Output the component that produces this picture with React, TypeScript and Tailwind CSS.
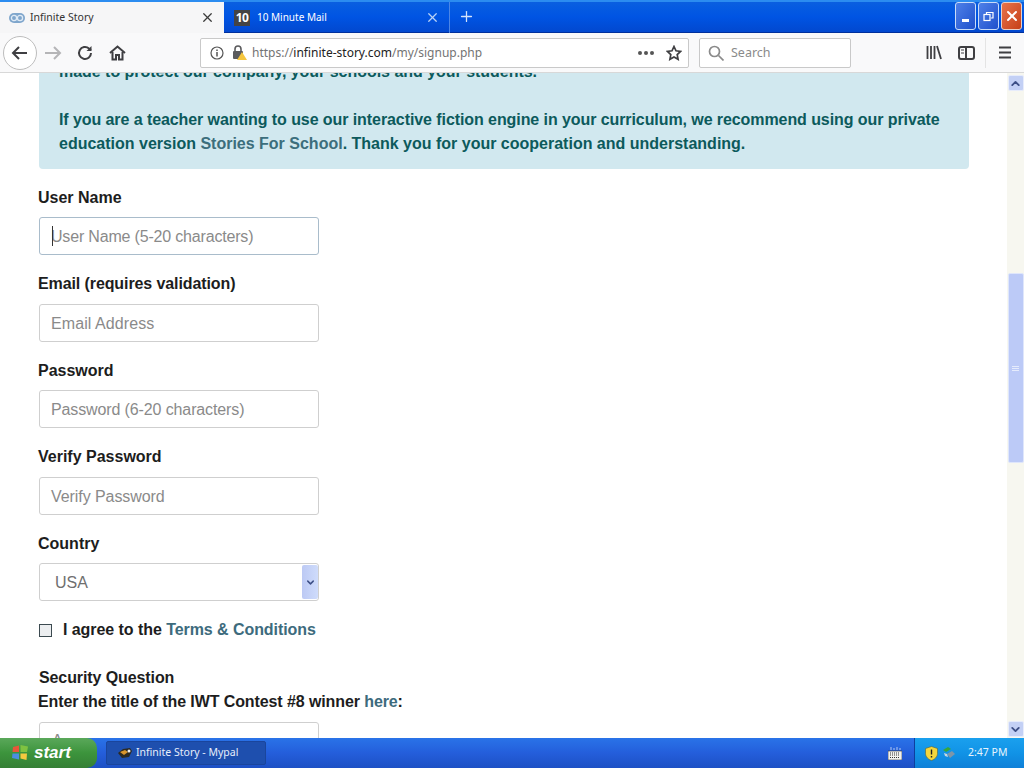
import React from "react";
import { ChevronUp, ChevronDown, X, Plus } from "lucide-react";

const Label = ({ children, className = "" }: { children: React.ReactNode; className?: string }) => (
  <label className={`block h-6 leading-6 text-[16px] font-bold text-[#1d1d1d] ${className}`}>{children}</label>
);

const Field = ({ label, placeholder, focus, labelClass = "", textClass = "" }: { label: string; placeholder: string; focus?: boolean; labelClass?: string; textClass?: string }) => (
  <div className="mb-[17px]">
    <Label className={`mb-[7.5px] ${labelClass}`}>{label}</Label>
    <div className={`relative ml-px w-[280px] h-[38px] rounded-[3px] border bg-white flex items-center pl-[11px] pt-[2px] text-[16px] text-[#8a8a8a] ${focus ? "border-[#a9bccb]" : "border-[#cfcfcf]"} ${textClass}`}>
      {focus && <span className="absolute left-3 top-[8px] w-px h-5 bg-[#333]" />}
      {placeholder}
    </div>
  </div>
);

const Sidebar = () => (
  <svg width="20" height="16" viewBox="0 0 20 16" fill="none" stroke="#3f3f42" strokeWidth="2">
    <rect x="2" y="2" width="15" height="12" rx="2" />
    <path d="M9 2v12" />
    <path d="M4 5h3M4 8h3" strokeWidth="1" />
  </svg>
);

export default function App() {
  return (
    <div className="relative w-[1024px] h-[768px] overflow-hidden flex flex-col bg-white font-['Liberation_Sans',sans-serif]">
      {/* title bar + tabs */}
      <div className="h-[33px] shrink-0 flex bg-gradient-to-b from-[#0a5fe0] via-[#0054e3] to-[#0248cf] border-t-2 border-[#2b8cf0] border-b border-b-[#00309c]">
        <div className="w-[224px] h-[31px] bg-[#f6f6f7] flex items-center font-['Noto_Sans',sans-serif] text-[10.5px] text-[#333]">
          <svg className="ml-[9px] mr-[5px]" width="16" height="10" viewBox="0 0 16 10">
            <rect width="16" height="10" rx="5" fill="#7fa6cc" />
            <circle cx="5" cy="5" r="2.6" fill="none" stroke="#dfeaf5" strokeWidth="1.3" />
            <circle cx="11" cy="5" r="2.6" fill="none" stroke="#dfeaf5" strokeWidth="1.3" />
          </svg>
          <span>Infinite Story</span>
          <X className="ml-auto mr-[9px]" size={15} strokeWidth={2} color="#3a3a3a" />
        </div>
        <div className="w-[226px] h-[31px] flex items-center font-['Noto_Sans',sans-serif] text-[10px] text-white border-r border-[#4c86e6]">
          <span className="ml-[10px] mr-[7px] w-4 h-4 bg-[#444] text-white text-[12px] font-bold leading-4 text-center tracking-[-0.5px]">10</span>
          <span>10 Minute Mail</span>
          <X className="ml-auto mr-[9px]" size={15} strokeWidth={2} color="#b9d2f6" />
        </div>
        <Plus className="ml-[8px] mt-[6px]" size={17} strokeWidth={1.8} color="#d5e4fb" />
        <div className="ml-auto flex gap-[2px] pr-[2px]">
          <div className="w-[21px] h-[28px] rounded-[3px] border border-[#c9dcf8] bg-gradient-to-br from-[#4f80e8] to-[#1f50cc] flex items-end justify-center pb-[7px]">
            <span className="block w-[7px] h-[3px] bg-white" />
          </div>
          <div className="w-[21px] h-[28px] rounded-[3px] border border-[#c9dcf8] bg-gradient-to-br from-[#4f80e8] to-[#1f50cc] flex items-center justify-center">
            <svg width="11" height="11" viewBox="0 0 11 11" fill="none" stroke="#fff">
              <rect x="1" y="3.5" width="6" height="6" strokeWidth="1.2" />
              <path d="M3.5 3V1.5h6.5V7H8" strokeWidth="1.2" />
            </svg>
          </div>
          <div className="w-[21px] h-[28px] rounded-[3px] border border-[#e8d0c8] bg-gradient-to-br from-[#e8734a] to-[#c63f16] flex items-center justify-center">
            <X size={16} strokeWidth={3} color="#fff" />
          </div>
        </div>
      </div>

      {/* nav bar */}
      <div className="h-[40px] shrink-0 flex items-center bg-[#f9f9fa] border-b border-[#d8d8d8]">
        <div className="ml-[3px] w-[34px] h-[34px] rounded-full border border-[#bdbdbd] bg-white flex items-center justify-center">
          <svg width="18" height="16" viewBox="0 0 18 16" fill="none" stroke="#3f3f42" strokeWidth="2"><path d="M16 8H2M8 2L2 8l6 6" /></svg>
        </div>
        <svg className="ml-[7px]" width="18" height="16" viewBox="0 0 18 16" fill="none" stroke="#b5b5b7" strokeWidth="2"><path d="M1 8h15M10 2l6 6-6 6" /></svg>
        <svg className="ml-[15px]" width="16" height="16" viewBox="0 0 16 16" fill="none" stroke="#3f3f42" strokeWidth="2"><path d="M14 8a6 6 0 1 1-2-4.5L14 5" /><path d="M14.5 1v5h-5" fill="#3f3f42" strokeWidth="0" /></svg>
        <svg className="ml-[16px]" width="17" height="16" viewBox="0 0 17 16" fill="none" stroke="#3f3f42" strokeWidth="2"><path d="M1 8l7.5-6.5L16 8" /><path d="M3.5 7v7.5h3.5V10h3v4.5h3.5V7" /></svg>
        <div className="ml-[74px] w-[489px] h-[30px] rounded-[2px] border border-[#c9c9c9] bg-white flex items-center font-['Noto_Sans',sans-serif] text-[12px] text-[#737373]">
          <svg className="ml-[9px]" width="14" height="14" viewBox="0 0 14 14" fill="none" stroke="#555"><circle cx="7" cy="7" r="6" strokeWidth="1.2" /><path d="M7 6v4.5M7 3.5v1.5" strokeWidth="1.5" /></svg>
          <svg className="ml-[8px] mr-[5px]" width="15" height="15" viewBox="0 0 15 15">
            <rect x="1" y="6" width="10" height="8" rx="1" fill="#5b5b5d" />
            <path d="M3 6V4a3 3 0 0 1 6 0v2" fill="none" stroke="#5b5b5d" strokeWidth="1.6" />
            <path d="M10 7l5 8H5z" fill="#f5c63f" />
          </svg>
          <span className="pt-px">https://<span className="text-[#222]">infinite-story.com</span>/my/signup.php</span>
          <div className="ml-auto flex gap-[2px]">
            <span className="w-1 h-1 rounded-full bg-[#555]" /><span className="w-1 h-1 rounded-full bg-[#555]" /><span className="w-1 h-1 rounded-full bg-[#555]" />
          </div>
          <svg className="ml-[12px] mr-[6px]" width="16" height="16" viewBox="0 0 16 16" fill="none" stroke="#3f3f42" strokeWidth="1.7"><path d="M8 1.5l2 4.3 4.6.6-3.4 3.2.9 4.7L8 12l-4.1 2.3.9-4.7L1.4 6.4 6 5.8z" /></svg>
        </div>
        <div className="ml-[10px] w-[152px] h-[30px] rounded-[2px] border border-[#c9c9c9] bg-white flex items-center font-['Noto_Sans',sans-serif] text-[12.5px] text-[#8a8a8a]">
          <svg className="ml-[8px] mr-[7px]" width="16" height="16" viewBox="0 0 16 16" fill="none" stroke="#8a8a8a" strokeWidth="1.7"><circle cx="6.5" cy="6.5" r="5" /><path d="M10.5 10.5l5 5" /></svg>
          <span className="pt-px">Search</span>
        </div>
        <svg className="ml-[75px]" width="16" height="15" viewBox="0 0 16 15" fill="none" stroke="#3f3f42" strokeWidth="1.8"><path d="M1.5 1v13M5 1v13M8.5 1v13M11 1l4 13" /></svg>
        <div className="ml-[15px] flex"><Sidebar /></div>
        <div className="ml-[8px] h-[30px] w-px bg-[#e4e4e4]" />
        <svg className="ml-[12px]" width="14" height="13" viewBox="0 0 14 13" fill="none" stroke="#3f3f42" strokeWidth="2"><path d="M1 1.5h12M1 6.5h12M1 11.5h12" /></svg>
      </div>

      {/* page + scrollbar */}
      <div className="flex-1 min-h-0 flex overflow-hidden">
        <div className="flex-1 min-w-0 overflow-hidden pl-[38px]">
          <div className="-mt-[13px] ml-px w-[930px] h-[108.5px] rounded-b-[4px] bg-[#d1e8ef] px-5 text-[16px] leading-6 font-bold text-[#0c5a5c] mb-[17px]">
            <p className="tracking-[-0.03px]">made to protect our company, your schools and your students.</p>
            <p className="mt-6">
              <span className="block tracking-[-0.08px]">If you are a teacher wanting to use our interactive fiction engine in your curriculum, we recommend using our private</span>
              <span className="block">education version <a className="text-[#3c6e7c]">Stories For School</a>. Thank you for your cooperation and understanding.</span>
            </p>
          </div>
          <Field label="User Name" placeholder="User Name (5-20 characters)" focus textClass="tracking-[-0.18px]" />
          <Field label="Email (requires validation)" placeholder="Email Address" labelClass="tracking-[-0.1px]" textClass="tracking-[0.08px]" />
          <Field label="Password" placeholder="Password (6-20 characters)" textClass="tracking-[-0.12px]" />
          <Field label="Verify Password" placeholder="Verify Password" textClass="tracking-[-0.07px]" />
          <div>
            <Label className="mb-[7.5px]">Country</Label>
            <div className="relative ml-px w-[280px] h-[38px] rounded-[3px] border border-[#cfcfcf] bg-white flex items-center pl-[15px] pt-[2px] text-[16px] text-[#6f6f6f]">
              USA
              <div className="absolute right-0 top-px w-4 h-[34px] rounded-[2px] bg-gradient-to-r from-[#bcc9f4] to-[#cfdcfb] flex items-center justify-center">
                <ChevronDown size={11} strokeWidth={3.2} color="#3d4f86" />
              </div>
            </div>
          </div>
          <div className="flex items-center mt-[17px] h-6">
            <span className="block w-[13px] h-[13px] border border-[#3c4a50] bg-[#eceef0] mr-[11px] ml-px" />
            <span className="text-[16px] font-bold text-[#1d1d1d] tracking-[-0.06px]">I agree to the <a className="text-[#3d6b7d]">Terms &amp; Conditions</a></span>
          </div>
          <div className="mt-[24px] ml-px h-6 leading-6 text-[16px] font-bold text-[#1d1d1d] tracking-[-0.1px]">Security Question</div>
          <div className="h-6 leading-6 text-[16px] font-bold text-[#1d1d1d] tracking-[-0.1px]">Enter the title of the IWT Contest #8 winner <a className="text-[#3d6b7d]">here</a>:</div>
          <div className="mt-[8px] ml-px w-[280px] h-[38px] rounded-[3px] border border-[#cfcfcf] bg-white pl-3 pt-[6px] text-[16px] text-[#8a8a8a]">A</div>
        </div>
        <div className="w-[17px] shrink-0 bg-[#f7f7f0] flex flex-col items-center">
          <div className="w-[16px] h-[16px] mt-[2px] rounded-[2px] bg-[#c3d0f5] border border-[#e7ecfb] flex items-center justify-center"><ChevronUp size={13} strokeWidth={3.4} color="#3d4f86" /></div>
          <div className="mt-[182px] w-[16px] h-[190px] rounded-[2px] bg-[#bccaf7] border border-[#dfe6fb] flex items-center justify-center">
            <div className="flex flex-col gap-px">
              <span className="block w-[7px] h-px bg-[#e5ebfc]" /><span className="block w-[7px] h-px bg-[#e5ebfc]" /><span className="block w-[7px] h-px bg-[#e5ebfc]" />
            </div>
          </div>
          <div className="mt-auto mb-[1px] w-[16px] h-[16px] rounded-[2px] bg-[#c3d0f5] border border-[#e7ecfb] flex items-center justify-center"><ChevronDown size={13} strokeWidth={3.4} color="#3d4f86" /></div>
        </div>
      </div>

      {/* taskbar */}
      <div className="h-[30px] shrink-0 flex items-stretch bg-gradient-to-b from-[#2a73e8] via-[#245edb] to-[#1d50c4] font-['Noto_Sans',sans-serif]">
        <div className="w-[97px] rounded-r-[10px] bg-gradient-to-b from-[#5aa85a] via-[#3c943c] to-[#357f35] flex items-center pl-[11px]">
          <svg width="18" height="18" viewBox="0 0 18 18">
            <path d="M2 3l6-1.5V8H1.5z" fill="#e8563a" /><path d="M9.5 1L17 2.5 16 8H9.5z" fill="#7fc241" />
            <path d="M1.5 9.5H8v6l-7-1.5z" fill="#4a8ee0" /><path d="M9.5 9.5H16l-.5 6.5-6-1.5z" fill="#f5c93f" />
          </svg>
          <span className="ml-[5px] text-white italic font-bold text-[17px] font-['Liberation_Sans',sans-serif]">start</span>
        </div>
        <div className="ml-[9px] my-[3px] w-[160px] rounded-[2px] bg-[#1e4fae] border border-[#1a459c] flex items-center text-[10.5px] text-[#e6eefb]">
          <svg className="ml-[10px] mr-[3px]" width="16" height="14" viewBox="0 0 16 14">
            <path d="M1 7l5-4 7-1 2 3-3 6-7 1z" fill="#2d2a22" /><path d="M3 6l5-2 3 2-4 3z" fill="#d9962e" /><circle cx="12" cy="5" r="1.5" fill="#f0f0f0" />
          </svg>
          Infinite Story - Mypal
        </div>
        <div className="ml-auto mr-[12px] self-center">
          <svg width="14" height="13" viewBox="0 0 14 13">
            <rect x="0" y="4" width="14" height="9" fill="#f2f2ee" stroke="#333" strokeWidth="0.6" />
            <path d="M2 6h10M2 8h10M2 10.5h10" stroke="#333" strokeDasharray="1 1" />
            <path d="M3 0v3M6 1v2M9 0v3M12 1v2" stroke="#d8e3f5" strokeWidth="0.8" />
          </svg>
        </div>
        <div className="w-[110px] bg-gradient-to-b from-[#1aa0ee] via-[#1193e6] to-[#0f80d8] border-l border-[#0e3f9e] flex items-center text-[10.5px] text-[#e8f4fd]">
          <svg className="ml-[10px]" width="13" height="15" viewBox="0 0 13 15">
            <path d="M6.5 0.5l6 2v5c0 3.5-3 6-6 7-3-1-6-3.5-6-7v-5z" fill="#f4d63c" stroke="#55633a" strokeWidth="0.6" />
            <path d="M6.5 3.5v5M6.5 10v1.5" stroke="#222" strokeWidth="1.4" />
          </svg>
          <svg className="ml-[4px]" width="14" height="14" viewBox="0 0 14 14">
            <path d="M1 4l5-3 3 2-5 3z" fill="#38a63a" /><path d="M5 8l5-3 3 3-5 4z" fill="#7e96a8" /><path d="M2 7l3 1 1 3-3-1z" fill="#c9d7e0" />
          </svg>
          <span className="ml-[12px]">2:47 PM</span>
        </div>
      </div>
    </div>
  );
}
